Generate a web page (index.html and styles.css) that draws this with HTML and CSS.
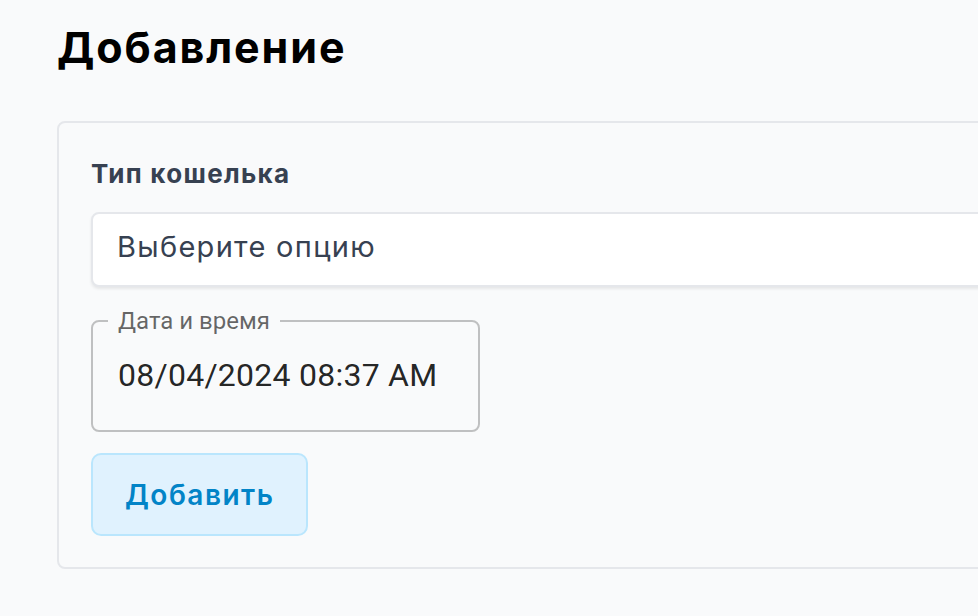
FILE: index.html
```html
<!DOCTYPE html>
<html>
<head>
    <meta charset="UTF-8">
    <title>Добавление</title>
    <link rel="stylesheet" href="styles.css">
</head>
<body>
  <div class="page">
    <h1 class="title">Добавление</h1>
    <form class="card">
        <label class="field-label" for="wallet">Тип кошелька</label>
        <div class="select" id="wallet">Выберите опцию</div>

        <fieldset class="date-field">
            <legend>Дата и время</legend>
            <div class="date-value">08/04/2024 08:37 AM</div>
        </fieldset>

        <div class="actions">
            <button type="button" class="add-btn">Добавить</button>
        </div>
    </form>
  </div>
</body>
</html>
```

FILE: styles.css
```css
html, body {
    margin: 0;
    height: 100%;
    overflow: hidden;
}
body {
    background-color: #f9fafb;
}
.page {
    padding-left: 57px;
    width: 1200px;
}
.title {
    font-family: Inter, "Liberation Sans", sans-serif;
    font-weight: 700;
    font-size: 43px;
    letter-spacing: 1.9px;
    line-height: 52px;
    color: #000;
    margin: 21px 0 48px;
}
.card {
    border: 2px solid #e5e7eb;
    border-radius: 8px;
    background-color: #f9fafb;
    padding: 33px 32px 31px;
    display: flex;
    flex-direction: column;
}
.field-label {
    font-family: Inter, sans-serif;
    font-weight: 700;
    font-size: 26px;
    letter-spacing: 1.3px;
    line-height: 36px;
    color: #374151;
    margin-bottom: 20px;
}
.select {
    box-sizing: border-box;
    height: 75px;
    display: flex;
    align-items: center;
    padding: 0 24px 6px;
    background-color: #fff;
    border: 2px solid #e5e7eb;
    border-radius: 8px;
    box-shadow: 0 2px 3px rgba(0, 0, 0, 0.08);
    font-family: Inter, sans-serif;
    font-size: 29px;
    letter-spacing: 1.3px;
    color: #374151;
    margin-bottom: 20px;
}
.date-field {
    box-sizing: border-box;
    width: 389px;
    margin: 0 0 21px;
    padding: 0 25px;
    border: 2px solid rgba(0, 0, 0, 0.23);
    border-radius: 8px;
    font-family: Roboto, sans-serif;
}
.date-field legend {
    font-size: 24px;
    line-height: 28px;
    color: rgba(0, 0, 0, 0.6);
    padding: 0 10px;
    margin-left: -10px;
}
.date-value {
    font-size: 32px;
    letter-spacing: 0.25px;
    line-height: 32px;
    color: rgba(0, 0, 0, 0.87);
    padding: 24px 0 39px;
}
.add-btn {
    height: 83px;
    padding: 0 32px;
    background-color: #e0f2fe;
    border: 2px solid #bae6fd;
    border-radius: 10px;
    font-family: Inter, sans-serif;
    font-weight: 600;
    font-size: 28px;
    letter-spacing: 1.5px;
    color: #0284c7;
}
```
